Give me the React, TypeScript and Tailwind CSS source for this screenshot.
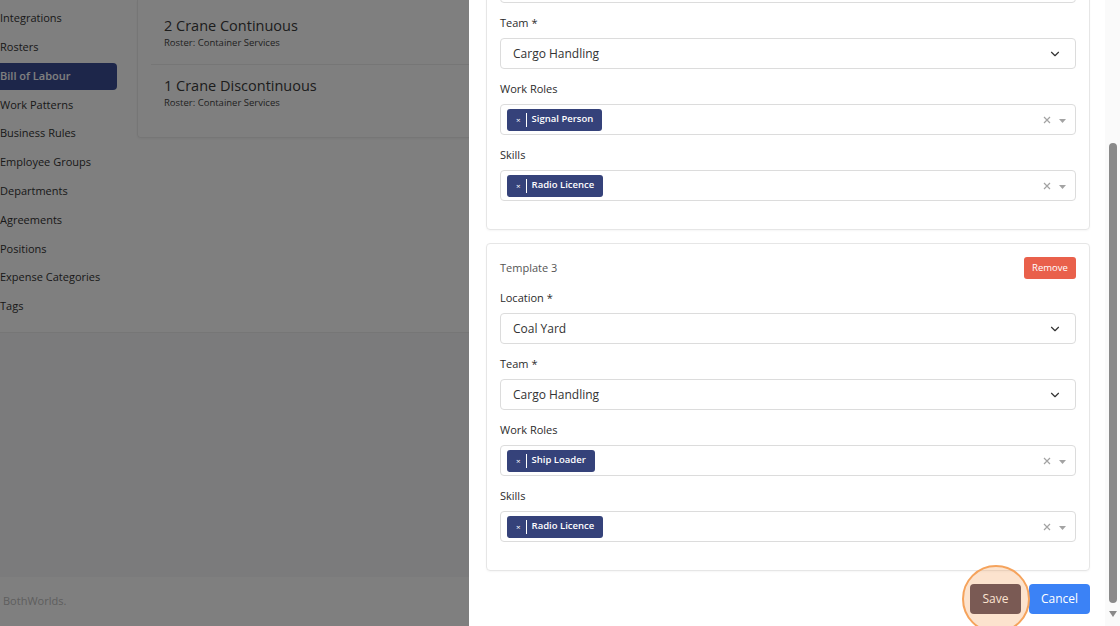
import { ChevronDown } from "lucide-react";

const font = "font-['Open_Sans','Noto_Sans',sans-serif]";

const navItems = [
  "Integrations",
  "Rosters",
  "Bill of Labour",
  "Work Patterns",
  "Business Rules",
  "Employee Groups",
  "Departments",
  "Agreements",
  "Positions",
  "Expense Categories",
  "Tags",
];

const bills = [
  { name: "2 Crane Continuous", roster: "Container Services" },
  { name: "1 Crane Discontinuous", roster: "Container Services" },
];

type Template = {
  title: string;
  location: string;
  team: string;
  roles: string[];
  skills: string[];
};

const templates: Template[] = [
  { title: "Template 2", location: "Coal Yard", team: "Cargo Handling", roles: ["Signal Person"], skills: ["Radio Licence"] },
  { title: "Template 3", location: "Coal Yard", team: "Cargo Handling", roles: ["Ship Loader"], skills: ["Radio Licence"] },
];

function Label({ children }: { children: React.ReactNode }) {
  return <div className="h-[16px] leading-[16px] text-[11px] font-medium text-[#2b2b2b] mb-[7px]">{children}</div>;
}

function Select({ value }: { value: string }) {
  return (
    <div className="h-[31px] border border-[#dcdcdc] rounded-[4px] flex items-center justify-between pl-[12px] pr-[13px]">
      <span className="text-[12px] text-[#333]">{value}</span>
      <ChevronDown className="w-[14px] h-[14px] text-[#333]" strokeWidth={2} />
    </div>
  );
}

function MultiSelect({ values }: { values: string[] }) {
  return (
    <div className="h-[31px] border border-[#dcdcdc] rounded-[4px] flex items-center justify-between pl-[6px] pr-[9px]">
      <div className="flex gap-1">
        {values.map((v) => (
          <span key={v} className="h-[22px] bg-[#35427a] rounded-[3px] flex items-center pl-[9px] pr-[9px] text-white">
            <span className="text-[8px] leading-none">×</span>
            <span className="w-px h-[14px] bg-white mx-[5px]" />
            <span className="text-[9.5px] font-semibold">{v}</span>
          </span>
        ))}
      </div>
      <div className="flex items-center gap-[8px]">
        <svg width="8" height="8" viewBox="0 0 8 8" className="text-[#a3a3a3]">
          <path d="M1 1 L7 7 M7 1 L1 7" stroke="currentColor" strokeWidth="1.2" />
        </svg>
        <svg width="7" height="4" viewBox="0 0 7 4" className="text-[#a3a3a3] mt-[2px]">
          <path d="M0 0 H7 L3.5 4 Z" fill="currentColor" />
        </svg>
      </div>
    </div>
  );
}

function TemplateCard({ t }: { t: Template }) {
  return (
    <div className="shrink-0 border border-[#e6e6e6] rounded-[4px] px-[13px] pt-[13px] pb-[28px] shadow-[0_1px_2px_rgba(0,0,0,0.04)]">
      <div className="h-[22px] flex items-center justify-between mb-[11px]">
        <span className="text-[11px] text-[#555]">{t.title}</span>
        <button className="h-[22px] w-[52px] rounded-[3px] bg-[#e9604b] text-white text-[9.5px] font-medium">Remove</button>
      </div>
      <div className="flex flex-col gap-[12px]">
        <div>
          <Label>Location *</Label>
          <Select value={t.location} />
        </div>
        <div>
          <Label>Team *</Label>
          <Select value={t.team} />
        </div>
        <div>
          <Label>Work Roles</Label>
          <MultiSelect values={t.roles} />
        </div>
        <div>
          <Label>Skills</Label>
          <MultiSelect values={t.skills} />
        </div>
      </div>
    </div>
  );
}

export default function App() {
  return (
    <div className={`${font} h-screen flex flex-col bg-[#f6f6f8] overflow-hidden`}>
      {/* Page behind the drawer */}
      <div className="h-[333px] bg-white border-b border-[#ececec] flex shrink-0">
        <nav className="w-[137px] pt-[5px] flex flex-col gap-[1.8px]">
          {navItems.map((item) => (
            <div
              key={item}
              className={
                item === "Bill of Labour"
                  ? "h-[27px] w-[117px] flex items-center rounded-r-[4px] bg-[#3a4d94] text-white text-[11px] font-semibold"
                  : "h-[27px] flex items-center text-[11px] font-medium text-[#333]"
              }
            >
              {item}
            </div>
          ))}
        </nav>
        <div className="flex-1">
          <div className="w-[520px] border-x border-b border-[#ececec] rounded-b-[4px] shadow-[0_1px_3px_rgba(0,0,0,0.05)] pt-[5px] pb-[14px]">
            {bills.map((b, i) => (
              <div key={b.name} className={i === 0 ? "ml-[13px] pl-[13px] pt-[11px] pb-[15px] border-b border-[#ececec]" : "ml-[13px] pl-[13px] pt-[11px] pb-[14px]"}>
                <div className="text-[14.5px] leading-[20px] font-medium text-[#3a3a3a]">{b.name}</div>
                <div className="text-[9.5px] leading-[13px] font-medium text-[#444]">Roster: {b.roster}</div>
              </div>
            ))}
          </div>
        </div>
      </div>
      <div className="flex-1" />
      <footer className="h-[49px] bg-white flex items-center pl-[3px] shrink-0">
        <span className="text-[11px] text-[#bdbdbd]">BothWorlds.</span>
      </footer>

      {/* Dim overlay */}
      <div className="fixed inset-0 bg-black/50 z-10" />

      {/* Drawer */}
      <aside className="fixed right-0 top-0 h-screen w-[651px] bg-white z-20 flex">
        <div className="flex-1 flex flex-col justify-end overflow-hidden pl-[17px] pr-[15px] pb-[12px]">
          {templates.map((t, i) => (
            <div key={t.title} className={i === 0 ? "shrink-0" : "shrink-0 mt-[13px]"}>
              <TemplateCard t={t} />
            </div>
          ))}
          <div className="shrink-0 mt-[13px] flex justify-end gap-[8px]">
            <div className="relative">
              <button className="h-[30px] w-[51px] rounded-[4px] bg-[#453b51] text-white text-[12px]">Save</button>
              <div className="absolute left-1/2 top-1/2 -translate-x-1/2 -translate-y-1/2 w-[68px] h-[68px] rounded-full border-2 border-[#f5a35c] bg-[#f5a35c]/30 pointer-events-none" />
            </div>
            <button className="h-[30px] w-[61px] rounded-[4px] bg-[#3b82f6] text-white text-[12px]">Cancel</button>
          </div>
        </div>
        <div className="w-[15px] bg-[#fafafa] flex flex-col items-center pt-[143px]">
          <div className="w-[8px] h-[460px] rounded-full bg-[#8a8a8a]" />
          <svg width="8" height="6" viewBox="0 0 8 6" className="mt-[8px] text-[#8a8a8a]">
            <path d="M0 0 H8 L4 6 Z" fill="currentColor" />
          </svg>
        </div>
      </aside>
    </div>
  );
}
